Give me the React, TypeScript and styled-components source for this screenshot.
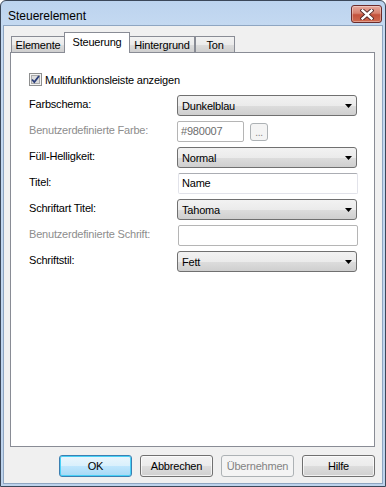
import styled, { createGlobalStyle, css } from "styled-components";

const GlobalStyle = createGlobalStyle`
  html, body {
    margin: 0;
    padding: 0;
    background: #ffffff;
  }
  body {
    font-family: "Liberation Sans", Arial, sans-serif;
    font-size: 11px;
    letter-spacing: -0.2px;
    color: #000;
  }
  * {
    box-sizing: border-box;
  }
`;

const Window = styled.div`
  width: 386px;
  height: 487px;
  display: flex;
  flex-direction: column;
  border: 1px solid #3b4759;
  border-radius: 6px 6px 0 0;
  background: linear-gradient(180deg, #bcd3ee 0px, #c4d9f1 24px, #bdd3ec 100%);
`;

const TitleBar = styled.div`
  height: 24px;
  flex: 0 0 24px;
  display: flex;
  justify-content: space-between;
  padding: 0 3px 0 7px;
`;

const Title = styled.span`
  font-size: 12px;
  line-height: 12px;
  letter-spacing: 0;
  margin-top: 9px;
  color: #000;
`;

const CloseButton = styled.div`
  width: 31px;
  height: 18px;
  margin-top: 4px;
  border: 1px solid #6b2b2b;
  border-radius: 3px;
  display: flex;
  align-items: center;
  justify-content: center;
  background: linear-gradient(180deg, #e6a89d 0%, #d7826f 45%, #c4523c 55%, #cf6a50 100%);
  box-shadow: inset 0 0 0 1px rgba(255, 255, 255, 0.35);
`;

const Client = styled.div`
  flex: 1;
  margin: 0 2px 2px 2px;
  border: 1px solid #8fa6c2;
  background: #f0f0f0;
  display: flex;
  flex-direction: column;
  padding: 6px 7px 6px 6px;
`;

const TabStrip = styled.div`
  display: flex;
  align-items: flex-end;
  height: 20px;
  padding-left: 1px;
`;

const Tab = styled.div<{ $active?: boolean; $w: number }>`
  width: ${(p) => p.$w}px;
  border: 1px solid #898c95;
  border-bottom: none;
  display: flex;
  justify-content: center;
  font-size: 11px;
  ${(p) =>
    p.$active
      ? css`
          height: 21px;
          margin-bottom: -1px;
          position: relative;
          z-index: 1;
          background: #ffffff;
          padding-top: 3px;
          margin-left: -1px;
          margin-right: -1px;
        `
      : css`
          height: 16px;
          background: linear-gradient(180deg, #f2f2f2 0%, #ebebeb 50%, #dddddd 51%, #cfcfcf 100%);
          padding-top: 2px;
        `}
`;

const Panel = styled.div`
  flex: 1;
  border: 1px solid #898c95;
  background: #ffffff;
  padding: 20px 0 0 18px;
`;

const CheckRow = styled.label`
  display: flex;
  align-items: center;
  gap: 3px;
  height: 13px;
`;

const FormGrid = styled.div`
  display: grid;
  grid-template-columns: 149px 180px;
  grid-auto-rows: 21px;
  row-gap: 5px;
  margin-top: 9px;
`;

const Label = styled.span<{ $disabled?: boolean }>`
  padding-top: 3px;
  color: ${(p) => (p.$disabled ? "#8d8d8d" : "#000")};
  white-space: nowrap;
`;

const Combo = styled.div`
  height: 21px;
  border: 1px solid #707070;
  border-radius: 3px;
  display: flex;
  align-items: center;
  justify-content: space-between;
  padding: 0 4px 0 4px;
  margin-left: -1px;
  margin-right: 1px;
  background: linear-gradient(180deg, #f2f2f2 0%, #ebebeb 50%, #dddddd 51%, #cfcfcf 100%);
`;

const TextBox = styled.div<{ $disabled?: boolean; $w?: number }>`
  height: 21px;
  width: ${(p) => (p.$w ? `${p.$w}px` : "100%")};
  border: 1px solid ${(p) => (p.$disabled ? "#b5b5b5" : "#e2e3ea")};
  border-top-color: ${(p) => (p.$disabled ? "#b5b5b5" : "#abadb3")};
  border-radius: 2px;
  background: #ffffff;
  padding: 3px 0 0 3px;
  color: ${(p) => (p.$disabled ? "#6d6d6d" : "#000")};
`;

const Inline = styled.div`
  display: flex;
  align-items: center;
  gap: 6px;
  margin-left: -1px;
`;

const SmallButton = styled.div`
  width: 18px;
  height: 18px;
  border: 1px solid #adb2b5;
  border-radius: 3px;
  background: #f4f4f4;
  color: #838383;
  font-size: 10px;
  display: flex;
  justify-content: center;
  align-items: flex-end;
  padding-bottom: 3px;
  line-height: 8px;
`;

const ButtonRow = styled.div`
  display: flex;
  justify-content: flex-end;
  gap: 8px;
  margin-top: 8px;
`;

const Button = styled.div<{ $variant?: "default" | "disabled" }>`
  width: 73px;
  height: 22px;
  border-radius: 3px;
  display: flex;
  align-items: center;
  justify-content: center;
  border: 1px solid #707070;
  background: linear-gradient(180deg, #f2f2f2 0%, #ebebeb 50%, #dddddd 51%, #cfcfcf 100%);
  box-shadow: inset 0 0 0 1px rgba(255, 255, 255, 0.7);
  ${(p) =>
    p.$variant === "default" &&
    css`
      border-color: #3c7fb1;
      background: linear-gradient(180deg, #eaf6fd 0%, #d9f0fc 50%, #bee6fd 51%, #a7d9f5 100%);
      box-shadow: inset 0 0 0 1px #48d1f7;
    `}
  ${(p) =>
    p.$variant === "disabled" &&
    css`
      border-color: #adb2b5;
      background: #f4f4f4;
      color: #838383;
      box-shadow: none;
    `}
`;

function Arrow() {
  return (
    <svg width="7" height="4" viewBox="0 0 7 4">
      <path d="M0 0 H7 L3.5 4 Z" fill="#000" />
    </svg>
  );
}

function CheckBox() {
  return (
    <svg width="13" height="13" viewBox="0 0 13 13">
      <rect x="0.5" y="0.5" width="12" height="12" fill="#f4f4f4" stroke="#8e8f8f" />
      <rect x="2.5" y="2.5" width="8" height="8" fill="#dcdcdc" stroke="#a9a9a9" />
      <path d="M3 6.5 L5.3 9 L10 3" fill="none" stroke="#2b3e7a" strokeWidth="1.8" />
    </svg>
  );
}

function CloseGlyph() {
  return (
    <svg width="14" height="11" viewBox="0 0 14 11">
      <path d="M2.5 1.5 L11.5 9.5 M11.5 1.5 L2.5 9.5" stroke="#4b2222" strokeWidth="4.2" strokeLinecap="square" />
      <path d="M2.5 1.5 L11.5 9.5 M11.5 1.5 L2.5 9.5" stroke="#ffffff" strokeWidth="2.4" strokeLinecap="square" />
    </svg>
  );
}

export default function App() {
  return (
    <>
      <GlobalStyle />
      <Window>
        <TitleBar>
          <Title>Steuerelement</Title>
          <CloseButton>
            <CloseGlyph />
          </CloseButton>
        </TitleBar>
        <Client>
          <TabStrip>
            <Tab $w={54}>Elemente</Tab>
            <Tab $w={66} $active>
              Steuerung
            </Tab>
            <Tab $w={66}>Hintergrund</Tab>
            <Tab $w={40}>Ton</Tab>
          </TabStrip>
          <Panel>
            <CheckRow>
              <CheckBox />
              <span>Multifunktionsleiste anzeigen</span>
            </CheckRow>
            <FormGrid>
              <Label>Farbschema:</Label>
              <Combo>
                <span>Dunkelblau</span>
                <Arrow />
              </Combo>

              <Label $disabled>Benutzerdefinierte Farbe:</Label>
              <Inline>
                <TextBox $disabled $w={67}>
                  #980007
                </TextBox>
                <SmallButton>...</SmallButton>
              </Inline>

              <Label>Füll-Helligkeit:</Label>
              <Combo>
                <span>Normal</span>
                <Arrow />
              </Combo>

              <Label>Titel:</Label>
              <TextBox>Name</TextBox>

              <Label>Schriftart Titel:</Label>
              <Combo>
                <span>Tahoma</span>
                <Arrow />
              </Combo>

              <Label $disabled>Benutzerdefinierte Schrift:</Label>
              <TextBox $disabled />

              <Label>Schriftstil:</Label>
              <Combo>
                <span>Fett</span>
                <Arrow />
              </Combo>
            </FormGrid>
          </Panel>
          <ButtonRow>
            <Button $variant="default">OK</Button>
            <Button>Abbrechen</Button>
            <Button $variant="disabled">Übernehmen</Button>
            <Button>Hilfe</Button>
          </ButtonRow>
        </Client>
      </Window>
    </>
  );
}
